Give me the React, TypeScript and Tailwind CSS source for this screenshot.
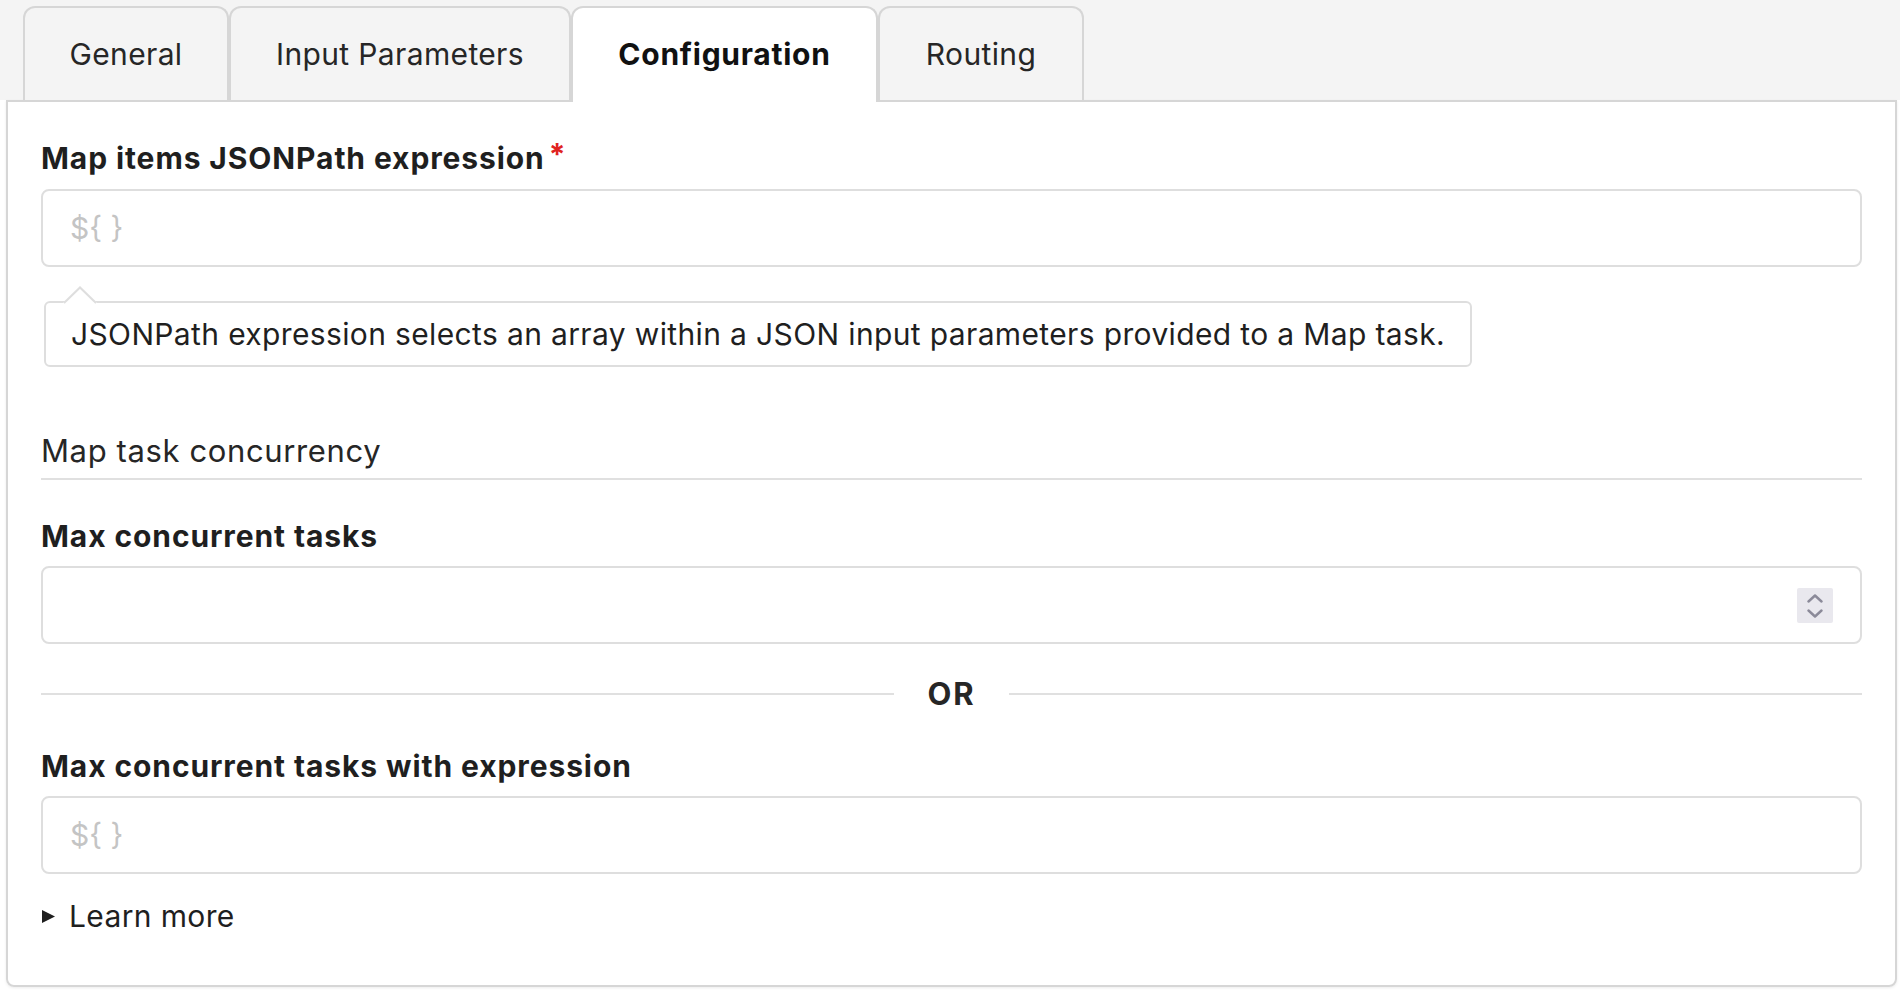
import React from "react";

const tabs = [
  { label: "General", w: "w-[206px]" },
  { label: "Input Parameters", w: "w-[342px]" },
  { label: "Configuration", w: "w-[307px]", active: true },
  { label: "Routing", w: "w-[206px]" },
];

function Label({ children, required }: { children: React.ReactNode; required?: boolean }) {
  return (
    <div className="flex items-start text-[30px] leading-[36px] font-bold tracking-[0.03em] text-[#1f1f1f]">
      <span>{children}</span>
      {required && <span className="ml-[4px] text-[30px] leading-[28px] text-[#e0231f]">*</span>}
    </div>
  );
}

function ExprInput() {
  return (
    <input
      placeholder="${ }"
      className="mt-[12px] block h-[78px] w-full rounded-[8px] border-2 border-[#dedede] bg-white px-[27px] text-[30px] text-[#1f1f1f] outline-none placeholder:text-[#c4c4c4]"
    />
  );
}

export default function App() {
  return (
    <div className="h-[1000px] w-[1900px] bg-white font-['Inter',sans-serif] text-[#1f1f1f]">
      <div className="flex h-[100px] items-end bg-[#f4f4f4] pl-[23px]">
        {tabs.map((t) =>
          t.active ? (
            <div
              key={t.label}
              className={`${t.w} relative z-10 -mb-[2px] flex h-[96px] items-center justify-center rounded-t-[12px] border-2 border-b-0 border-[#d6d6d6] bg-white pb-[2px] text-[30px] font-bold tracking-[0.025em] text-[#111]`}
            >
              {t.label}
            </div>
          ) : (
            <div
              key={t.label}
              className={`${t.w} flex h-[94px] items-center justify-center rounded-t-[12px] border-2 border-b-0 border-[#d6d6d6] bg-[#f4f4f4] text-[30px] tracking-[0.012em] text-[#262626]`}
            >
              {t.label}
            </div>
          )
        )}
      </div>

      <div className="ml-[6px] mr-[3px] rounded-b-[8px] border-2 border-[#d6d6d6] px-[33px] pb-[51px] pt-[38px] shadow-[0_1px_3px_rgba(0,0,0,0.08)]">
        <Label required>Map items JSONPath expression</Label>
        <div className="mt-[13px]">
          <input
            placeholder="${ }"
            className="block h-[78px] w-full rounded-[8px] border-2 border-[#dedede] bg-white px-[27px] text-[30px] text-[#1f1f1f] outline-none placeholder:text-[#c4c4c4]"
          />
        </div>

        <div className="relative ml-[3px] mt-[34px] inline-block rounded-[6px] border-2 border-[#dedede] bg-white px-[25px] py-[13px] text-[30px] leading-[36px] tracking-[0.012em] text-[#1f1f1f]">
          <svg className="absolute -top-[17px] left-[17px]" width="34" height="18" viewBox="0 0 34 18">
            <path d="M0 17 L17 1 L34 17 Z" fill="#fff" />
            <path d="M1 17 L17 1.5 L33 17" fill="none" stroke="#dedede" strokeWidth="2" />
          </svg>
          JSONPath expression selects an array within a JSON input parameters provided to a Map task.
        </div>

        <div className="mt-[66px] border-b-2 border-[#e0e0e0] pb-[9px] text-[31px] leading-[36px] tracking-[0.02em] text-[#262626]">
          Map task concurrency
        </div>

        <div className="mt-[38px]">
          <Label>Max concurrent tasks</Label>
        </div>
        <div className="relative mt-[12px] h-[78px] rounded-[8px] border-2 border-[#dedede] bg-white">
          <div className="absolute right-[27px] top-[20px] flex h-[35px] w-[36px] flex-col items-center justify-center gap-[6px] rounded-[2px] bg-[#e9e8ee]">
            <svg width="16" height="9" viewBox="0 0 16 9">
              <path d="M1.5 7.5 L8 1.5 L14.5 7.5" fill="none" stroke="#8b8a99" strokeWidth="2.4" strokeLinecap="round" strokeLinejoin="round" />
            </svg>
            <svg width="16" height="9" viewBox="0 0 16 9">
              <path d="M1.5 1.5 L8 7.5 L14.5 1.5" fill="none" stroke="#8b8a99" strokeWidth="2.4" strokeLinecap="round" strokeLinejoin="round" />
            </svg>
          </div>
        </div>

        <div className="mt-[32px] flex h-[36px] items-center">
          <div className="h-[2px] flex-1 bg-[#e0e0e0]" />
          <span className="mx-[34px] text-[31px] font-bold leading-[36px] tracking-[0.06em] text-[#262626]">OR</span>
          <div className="h-[2px] flex-1 bg-[#e0e0e0]" />
        </div>

        <div className="mt-[36px]">
          <Label>Max concurrent tasks with expression</Label>
        </div>
        <ExprInput />

        <div className="mt-[24px] flex h-[36px] items-center text-[30px] leading-[36px] tracking-[0.012em] text-[#1f1f1f]">
          <svg width="15" height="15" viewBox="0 0 15 15" className="mr-[13px]">
            <path d="M1 1 L14 7.5 L1 14 Z" fill="#1f1f1f" />
          </svg>
          Learn more
        </div>
      </div>
    </div>
  );
}
